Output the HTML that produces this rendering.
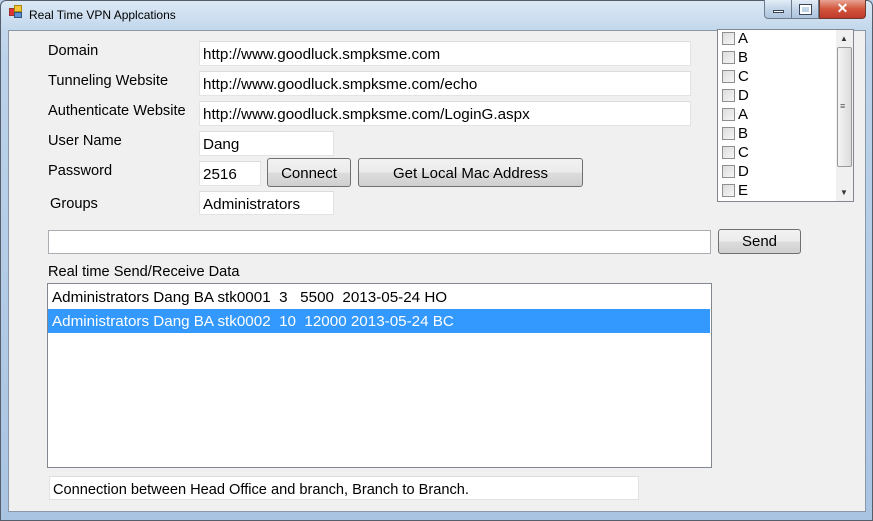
<!DOCTYPE html>
<html><head><style>
*{margin:0;padding:0;box-sizing:border-box}
body{width:873px;height:521px;overflow:hidden;background:#b9d1ea;font-family:"Liberation Sans",sans-serif;font-size:14.6px;color:#000;position:relative}
.frame{position:absolute;left:0;top:0;width:873px;height:521px;background:linear-gradient(#dbe8f5,#c2d7ec 30px,#bcd2ea 60px,#a9c4e2);border:1px solid #555e6a;border-radius:6px 6px 0 0}
.client{position:absolute;left:8px;top:30px;width:858px;height:482px;background:#f0f0f0;border:1px solid #8a97a6}
.a{position:absolute}
.lbl{position:absolute;white-space:nowrap;line-height:18px}
.tb{position:absolute;background:#fff;border:1px solid #e3e3e3;border-top-color:#dcdcdc;padding-left:3px;line-height:25px;white-space:nowrap;overflow:hidden;font-size:15.2px}
.btn{position:absolute;border:1px solid #707070;border-radius:3px;background:linear-gradient(#f2f2f2 0%,#ebebeb 50%,#dddddd 51%,#cfcfcf 100%);text-align:center;line-height:29px;font-size:15px}
.cb{position:absolute;left:722px;width:13px;height:13px;border:1px solid #8e8f8f;background:linear-gradient(135deg,#dcdcdc,#f6f6f6)}
.ct{position:absolute;left:738px;line-height:18px;font-size:15px}
</style></head><body>
<div class="frame"></div>
<div class="a" style="left:9px;top:8px;width:8px;height:8px;background:#d33;border:1px solid #933"></div>
<div class="a" style="left:14px;top:5px;width:8px;height:7px;background:#f3c53a;border:1px solid #a80"></div>
<div class="a" style="left:14px;top:12px;width:8px;height:6px;background:#5b8fd6;border:1px solid #357"></div>
<div class="lbl" style="left:29px;top:6px;font-size:12px;color:#000">Real Time VPN Applcations</div>
<div class="a" style="left:764px;top:0;width:28px;height:19px;border:1px solid #6d7b8d;border-top:none;border-radius:0 0 0 4px;background:linear-gradient(#e3ecf6,#c2d4e8 50%,#aec4de)"></div>
<div class="a" style="left:773px;top:10px;width:11px;height:3px;background:#fff;border:1px solid #3a4658"></div>
<div class="a" style="left:792px;top:0;width:27px;height:19px;border:1px solid #6d7b8d;border-top:none;border-left:none;background:linear-gradient(#e3ecf6,#c2d4e8 50%,#aec4de)"></div>
<div class="a" style="left:800px;top:5px;width:11px;height:9px;border:2px solid #fff;outline:1px solid #3a4658"></div>
<div class="a" style="left:819px;top:0;width:47px;height:19px;border:1px solid #6d3a30;border-top:none;border-radius:0 0 4px 0;background:linear-gradient(#e8a493,#d2553c 50%,#c0392b);color:#fff;font-weight:bold;text-align:center;line-height:17px;font-size:14px">✕</div>
<div class="client"></div>
<div class="lbl" style="left:48px;top:42px">Domain</div>
<div class="lbl" style="left:48px;top:72px">Tunneling Website</div>
<div class="lbl" style="left:48px;top:102px">Authenticate Website</div>
<div class="lbl" style="left:48px;top:132px">User Name</div>
<div class="lbl" style="left:48px;top:162px">Password</div>
<div class="lbl" style="left:50px;top:195px">Groups</div>
<div class="tb" style="left:199px;top:41px;width:492px;height:25px">http://www.goodluck.smpksme.com</div>
<div class="tb" style="left:199px;top:71px;width:492px;height:25px">http://www.goodluck.smpksme.com/echo</div>
<div class="tb" style="left:199px;top:101px;width:492px;height:25px">http://www.goodluck.smpksme.com/LoginG.aspx</div>
<div class="tb" style="left:199px;top:131px;width:135px;height:25px">Dang</div>
<div class="tb" style="left:199px;top:161px;width:62px;height:25px">2516</div>
<div class="btn" style="left:267px;top:158px;width:84px;height:29px">Connect</div>
<div class="btn" style="left:358px;top:158px;width:225px;height:29px">Get Local Mac Address</div>
<div class="tb" style="left:199px;top:191px;width:135px;height:24px">Administrators</div>
<div class="a" style="left:717px;top:29px;width:137px;height:173px;background:#fff;border:1px solid #828790"></div>
<div class="a" style="left:836px;top:30px;width:17px;height:171px;background:#f0f0f0"></div>
<div class="a" style="left:837px;top:47px;width:15px;height:120px;border:1px solid #9a9a9a;border-radius:2px;background:linear-gradient(90deg,#f4f4f4,#dcdcdc)"></div>
<div class="lbl" style="left:840px;top:30px;font-size:8px;color:#333">▲</div>
<div class="lbl" style="left:840px;top:184px;font-size:8px;color:#333">▼</div>
<div class="lbl" style="left:840px;top:97px;font-size:9px;color:#555">≡</div>
<div class="cb" style="top:32px"></div><div class="ct" style="top:30px">A</div>
<div class="cb" style="top:51px"></div><div class="ct" style="top:49px">B</div>
<div class="cb" style="top:70px"></div><div class="ct" style="top:68px">C</div>
<div class="cb" style="top:89px"></div><div class="ct" style="top:87px">D</div>
<div class="cb" style="top:108px"></div><div class="ct" style="top:106px">A</div>
<div class="cb" style="top:127px"></div><div class="ct" style="top:125px">B</div>
<div class="cb" style="top:146px"></div><div class="ct" style="top:144px">C</div>
<div class="cb" style="top:165px"></div><div class="ct" style="top:163px">D</div>
<div class="cb" style="top:184px"></div><div class="ct" style="top:182px">E</div>
<div class="tb" style="left:48px;top:230px;width:663px;height:24px;border-color:#abadb3"></div>
<div class="btn" style="left:718px;top:229px;width:83px;height:25px;line-height:24px">Send</div>
<div class="lbl" style="left:48px;top:263px">Real time Send/Receive Data</div>
<div class="a" style="left:47px;top:283px;width:665px;height:185px;background:#fff;border:1px solid #828790"></div>
<div class="lbl" style="left:52px;top:289px;font-size:15.2px">Administrators Dang BA stk0001&nbsp; 3&nbsp;&nbsp; 5500&nbsp; 2013-05-24 HO</div>
<div class="a" style="left:48px;top:309px;width:662px;height:24px;background:#3399ff"></div>
<div class="lbl" style="left:52px;top:313px;color:#fff;font-size:15.2px">Administrators Dang BA stk0002&nbsp; 10&nbsp; 12000 2013-05-24 BC</div>
<div class="tb" style="left:49px;top:476px;width:590px;height:24px;line-height:26px;font-size:14.6px">Connection between Head Office and branch, Branch to Branch.</div>
</body></html>
